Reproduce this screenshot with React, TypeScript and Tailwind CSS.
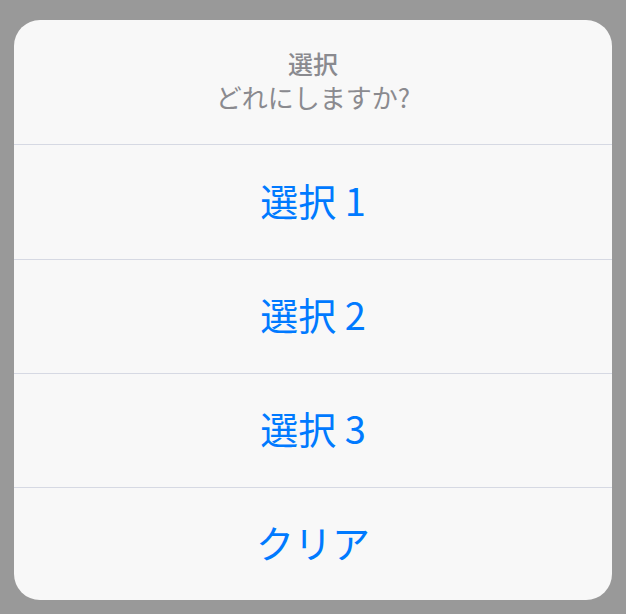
import React from "react";

const font = { fontFamily: '"Noto Sans CJK JP", "Noto Sans", sans-serif' };

export default function App() {
  const options = [
    { label: "選択 1", h: "h-[115px]" },
    { label: "選択 2", h: "h-[114px]" },
    { label: "選択 3", h: "h-[114px]" },
    { label: "クリア", h: "h-[113px]" },
  ];
  return (
    <div className="w-[626px] h-[614px] bg-[#999999] pt-[20px] px-[14px]" style={font}>
      <div className="w-[598px] h-[580px] bg-[#f8f8f8] rounded-[26px] overflow-hidden flex flex-col">
        <div className="h-[124px] flex flex-col items-center justify-center text-[#8a8a8f] pb-[4px]">
          <div className="text-[25px] leading-[34px] font-medium">選択</div>
          <div className="text-[26px] leading-[34px]">どれにしますか?</div>
        </div>
        {options.map((o) => (
          <div
            key={o.label}
            className={`${o.h} border-t border-[#d6d9e3] flex items-center justify-center text-[#007aff] text-[38px] pb-[6px]`}
          >
            {o.label}
          </div>
        ))}
      </div>
    </div>
  );
}
